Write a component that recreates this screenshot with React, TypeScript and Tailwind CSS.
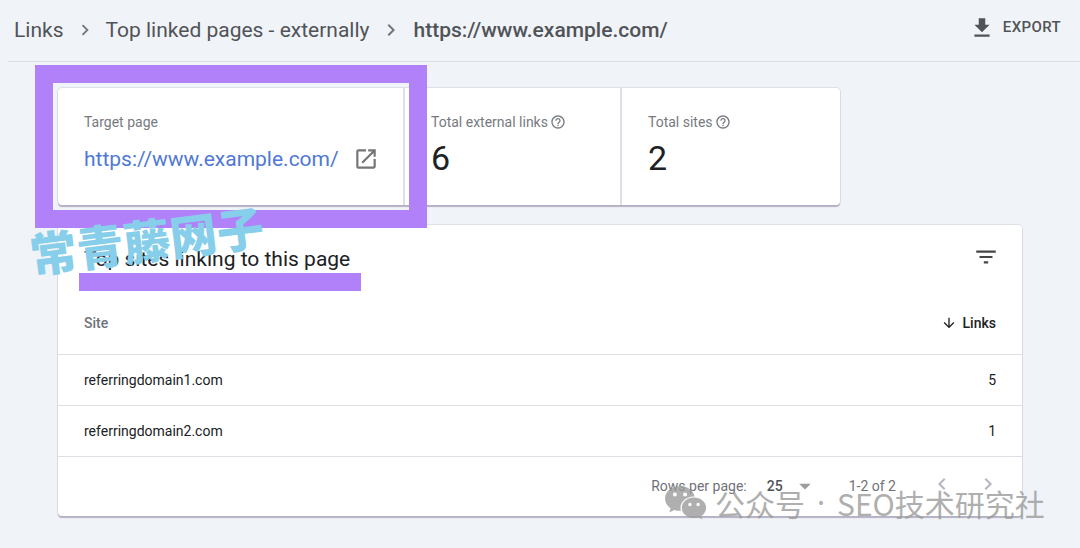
import { useState } from 'react';
import {
  MdArrowDownward,
  MdArrowDropDown,
  MdChevronLeft,
  MdChevronRight,
  MdFilterList,
  MdGetApp,
  MdHelpOutline,
  MdOpenInNew,
} from 'react-icons/md';

const TARGET_URL = 'https://www.example.com/';

const STATS = [
  { label: 'Total external links', value: 6 },
  { label: 'Total sites', value: 2 },
];

const SITES = [
  { site: 'referringdomain1.com', links: 5 },
  { site: 'referringdomain2.com', links: 1 },
];

function WechatIcon() {
  return (
    <svg className="w-[42px] h-[34px] shrink-0" viewBox="0 0 42 34">
      <path
        fill="#9c9c9c"
        fillRule="evenodd"
        d="M15 0C6.700 0 0 5.600 0 12.600c0 4 2.200 7.500 5.600 9.800L4.300 26.500l5-2.600c1.800.5 3.700.9 5.700.9h1c-.3-1-.5-2-.5-3 0-6.400 6-11.400 13.300-11.400h.9C28.300 4.400 22.300 0 15 0zM9.900 6.400a2 2 0 1 1 0 4 2 2 0 0 1 0-4zm10.200 0a2 2 0 1 1 0 4 2 2 0 0 1 0-4z"
      />
      <path
        fill="#9c9c9c"
        fillRule="evenodd"
        d="M29 11.500c-6.800 0-12.200 4.600-12.200 10.300S22.200 32 29 32c1.500 0 3-.3 4.400-.7l4 2.200-1.100-3.500c2.900-1.900 4.800-4.800 4.800-8.200C41.100 16.100 35.700 11.500 29 11.500zM24.900 16.800a1.700 1.700 0 1 1 0 3.400 1.700 1.700 0 0 1 0-3.400zm8.200 0a1.700 1.700 0 1 1 0 3.400 1.700 1.700 0 0 1 0-3.400z"
      />
    </svg>
  );
}

export default function App() {
  const [rowsPerPage, setRowsPerPage] = useState('25');

  return (
    <main className="relative min-h-screen overflow-hidden bg-[#f0f3f8] font-['Roboto',sans-serif] text-[#202124]">
      {/* Breadcrumb header */}
      <header className="ml-2 flex h-[62px] items-center justify-between border-b border-[#dcdfe4] pb-[2px] pl-[6px] pr-[19px] text-[#505357]">
        <nav className="flex items-center gap-[10px] text-[21px] leading-6">
          <a href="#links">Links</a>
          <MdChevronRight className="size-[22px] text-[#757575]" />
          <a href="#external">Top linked pages - externally</a>
          <MdChevronRight className="size-6 text-[#757575]" />
          <span className="font-medium">{TARGET_URL}</span>
        </nav>
        <button className="flex items-center gap-2 pb-1 text-[15px] font-medium tracking-wide">
          <MdGetApp className="size-[26px]" />
          EXPORT
        </button>
      </header>

      <div className="px-[58px] pt-[26px]">
        {/* Summary cards */}
        <section className="grid w-[782px] max-w-full grid-cols-[347fr_217fr_218fr] divide-x-2 divide-[#dde0e6] rounded-sm bg-white shadow-[0_2px_1px_#b4b1c4,0_0_0_1px_#dde0e6]">
          <div className="h-[117px] pl-[26px] pt-6">
            <h2 className="text-sm text-[#777a80]">Target page</h2>
            <div className="mt-[14px] flex items-center gap-[14px] text-[21px] leading-6">
              <a href={TARGET_URL} className="text-[#5078d4]">{TARGET_URL}</a>
              <MdOpenInNew className="size-[26px] text-[#757575]" />
            </div>
          </div>
          {STATS.map(({ label, value }) => (
            <div key={label} className="px-[26px] pt-6">
              <h2 className="flex items-center gap-[2px] text-sm text-[#777a80]">
                {label}
                <MdHelpOutline className="size-4" />
              </h2>
              <p className="mt-[6px] text-[34px] leading-10">{value}</p>
            </div>
          ))}
        </section>

        {/* Linking sites */}
        <section className="mt-5 rounded-sm bg-white shadow-[0_2px_1px_#b4b1c4,0_0_0_1px_#dde0e6]">
          <div className="flex h-[68px] items-center justify-between pl-[26px] pr-[23px]">
            <h1 className="text-[21px] leading-6">Top sites linking to this page</h1>
            <button aria-label="Filter" className="pb-1 text-[#444746]">
              <MdFilterList className="size-[26px]" />
            </button>
          </div>

          <table className="w-full text-sm">
            <thead>
              <tr className="h-[61px] border-b border-[#dcdfe6]">
                <th className="px-[26px] text-left font-medium text-[#6f7278]">Site</th>
                <th className="px-[26px] font-medium">
                  <button className="ml-auto flex items-center gap-[6px]">
                    <MdArrowDownward className="size-4" />
                    Links
                  </button>
                </th>
              </tr>
            </thead>
            <tbody>
              {SITES.map(({ site, links }) => (
                <tr key={site} className="h-[51px] border-b border-[#dcdfe6]">
                  <td className="px-[26px]">{site}</td>
                  <td className="px-[26px] text-right">{links}</td>
                </tr>
              ))}
            </tbody>
          </table>

          <div className="flex h-[59px] items-center justify-end pr-[22px] text-sm text-[#6f7278]">
            <label htmlFor="rows">Rows per page:</label>
            <div className="relative ml-5 mr-[38px]">
              <select
                id="rows"
                value={rowsPerPage}
                onChange={(e) => setRowsPerPage(e.target.value)}
                className="w-11 appearance-none bg-transparent font-medium text-[#505357]"
              >
                <option>10</option>
                <option>25</option>
                <option>50</option>
              </select>
              <MdArrowDropDown className="pointer-events-none absolute -right-2 -top-1 size-7 text-[#9a9ca0]" />
            </div>
            <span>1-2 of 2</span>
            <div className="ml-[34px] flex gap-[22px] pb-1 text-[#b4b6be]">
              <button aria-label="Previous page">
                <MdChevronLeft className="size-6" />
              </button>
              <button aria-label="Next page">
                <MdChevronRight className="size-6" />
              </button>
            </div>
          </div>
        </section>
      </div>

      {/* Highlights */}
      <div className="pointer-events-none absolute left-[35px] top-[65px] h-[163px] w-[392px] border-[18px] border-[#b081f9]" />
      <div className="pointer-events-none absolute left-[79px] top-[273px] h-[18px] w-[282px] bg-[#b081f9]" />

      {/* Watermarks */}
      <div className="pointer-events-none absolute left-[29px] top-[211px] -rotate-7 whitespace-nowrap font-['Noto_Sans_CJK_SC',sans-serif] text-[47px] font-black leading-[56px] text-[#87ceeb]">
        常青藤网子
      </div>
      <div className="pointer-events-none absolute left-[665px] top-[486px] flex items-center whitespace-nowrap font-['Noto_Sans_CJK_SC',sans-serif] text-[30px] leading-[34px] text-[#9c9c9c] opacity-80">
        <WechatIcon />
        <span className="ml-2">公众号</span>
        <span className="mx-3 font-['Noto_Sans',sans-serif]">·</span>
        <span>SEO技术研究社</span>
      </div>
    </main>
  );
}
